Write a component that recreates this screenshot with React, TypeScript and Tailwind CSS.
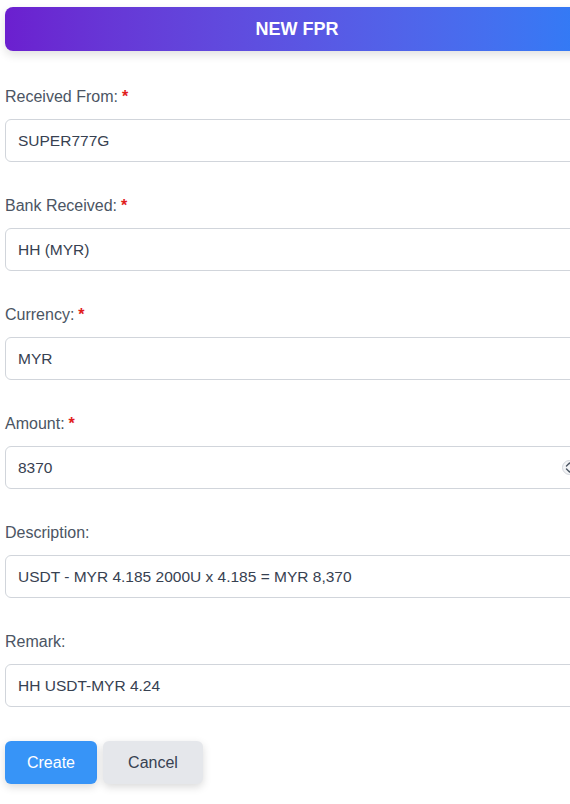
import React from "react";

const fields = [
  { label: "Received From:", value: "SUPER777G", required: true },
  { label: "Bank Received:", value: "HH (MYR)", required: true },
  { label: "Currency:", value: "MYR", required: true },
  { label: "Amount:", value: "8370", required: true, type: "number" },
  { label: "Description:", value: "USDT - MYR 4.185 2000U x 4.185 = MYR 8,370", required: false },
  { label: "Remark:", value: "HH USDT-MYR 4.24", required: false },
];

function Spinner() {
  return (
    <svg width="15" height="17" viewBox="0 0 15 17" className="absolute right-[12px] top-[13px] pointer-events-none">
      <circle cx="7.5" cy="8.5" r="7" fill="#f3f4f6" stroke="#d1d5db" strokeWidth="1" />
      <path d="M4.5 7 L7.5 4 L10.5 7" fill="none" stroke="#4b5563" strokeWidth="1.4" strokeLinecap="round" strokeLinejoin="round" />
      <path d="M4.5 10 L7.5 13 L10.5 10" fill="none" stroke="#4b5563" strokeWidth="1.4" strokeLinecap="round" strokeLinejoin="round" />
    </svg>
  );
}

export default function App() {
  return (
    <div className="w-full min-h-screen overflow-hidden bg-white" style={{ fontFamily: '"Liberation Sans", Arial, sans-serif' }}>
      <div className="w-[594px] pl-[5px] pr-[5px] pt-[7px]">
        {/* Header */}
        <div className="h-[44px] rounded-lg bg-gradient-to-r from-[#6b1fcf] to-[#2f7cf6] flex items-center justify-center shadow-[0_4px_10px_rgba(0,0,0,0.12)]">
          <h1 className="text-white font-bold text-[18px]">NEW FPR</h1>
        </div>

        <form className="mt-[34px] flex flex-col gap-[32px]">
          {fields.map((f) => (
            <div key={f.label} className="flex flex-col gap-[10px]">
              <label className="text-[16px] leading-[24px] text-[#4b5563]">
                {f.label}
                {f.required && <span className="text-[#e11d1d] font-bold ml-1">*</span>}
              </label>
              <div className="relative">
                <input
                  type={f.type ?? "text"}
                  defaultValue={f.value}
                  className="h-[43px] w-full rounded-md border border-[#d1d5db] bg-white px-3 text-[15.5px] text-[#374151] outline-none [appearance:textfield] [&::-webkit-inner-spin-button]:appearance-none [&::-webkit-outer-spin-button]:appearance-none"
                />
                {f.type === "number" && <Spinner />}
              </div>
            </div>
          ))}

          <div className="flex gap-[6px] mt-[2px]">
            <button type="button" className="h-[43px] w-[92px] rounded-md bg-[#3794f7] text-white text-[16px] shadow-[0_3px_8px_rgba(0,0,0,0.15)]">
              Create
            </button>
            <button type="button" className="h-[43px] w-[100px] rounded-md bg-[#e5e7eb] text-[#374151] text-[16px] shadow-[0_3px_8px_rgba(0,0,0,0.15)]">
              Cancel
            </button>
          </div>
        </form>
      </div>
    </div>
  );
}
